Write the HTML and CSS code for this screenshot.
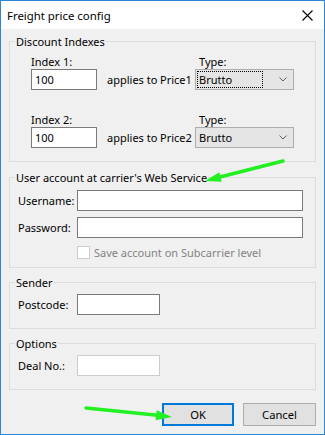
FILE: index.html
```html
<!DOCTYPE html>
<html lang="en">
<head>
  <meta charset="UTF-8" />
  <title>Freight price config</title>
  <link rel="stylesheet" href="styles.css">
</head>
<body>

  <div class="window">

    <!-- Title bar -->
    <div class="titlebar">
      <span class="title">Freight price config</span>
      <svg class="close" width="11" height="11" viewBox="0 0 11 11" aria-label="Close">
        <path d="M0.5 0.5 L10.5 10.5 M10.5 0.5 L0.5 10.5" stroke="#000" stroke-width="1.1" fill="none" />
      </svg>
    </div>

    <div class="content">

      <!-- Discount indexes -->
      <fieldset class="group">
        <legend>Discount Indexes</legend>
        <div class="group-body discount-body">
          <div class="index-row">
            <label class="row-label">Index 1:</label>
            <span></span>
            <span></span>
            <label class="type-label">Type:</label>
            <input class="textbox index-input" type="text" value="100" />
            <span class="applies">applies to</span>
            <span class="price">Price1</span>
            <div class="combo">
              <span class="combo-text focused">Brutto</span>
              <svg class="chevron" width="8" height="5" viewBox="0 0 8 5"><path d="M0.5 0.5 L4 4 L7.5 0.5" stroke="#606060" fill="none" /></svg>
            </div>
          </div>
          <div class="index-row second">
            <label class="row-label">Index 2:</label>
            <span></span>
            <span></span>
            <label class="type-label">Type:</label>
            <input class="textbox index-input" type="text" value="100" />
            <span class="applies">applies to</span>
            <span class="price">Price2</span>
            <div class="combo">
              <span class="combo-text">Brutto</span>
              <svg class="chevron" width="8" height="5" viewBox="0 0 8 5"><path d="M0.5 0.5 L4 4 L7.5 0.5" stroke="#606060" fill="none" /></svg>
            </div>
          </div>
        </div>
      </fieldset>

      <!-- Web service account -->
      <fieldset class="group group-account">
        <legend>User account at carrier's Web Service</legend>
        <div class="group-body account-body">
          <div class="form-grid">
            <label>Username:</label>
            <input class="textbox" type="text" />
            <label>Password:</label>
            <input class="textbox" type="password" />
            <div class="check-row">
              <span class="checkbox"></span>
              <span class="check-text">Save account on Subcarrier level</span>
            </div>
          </div>
        </div>
      </fieldset>

      <!-- Sender -->
      <fieldset class="group group-small">
        <legend>Sender</legend>
        <div class="group-body small-body">
          <div class="form-grid">
            <label>Postcode:</label>
            <input class="textbox short" type="text" />
          </div>
        </div>
      </fieldset>

      <!-- Options -->
      <fieldset class="group group-small">
        <legend>Options</legend>
        <div class="group-body small-body">
          <div class="form-grid">
            <label>Deal No.:</label>
            <input class="textbox short light" type="text" />
          </div>
        </div>
      </fieldset>

      <div class="buttons">
        <button type="button" class="btn btn-default">OK</button>
        <button type="button" class="btn">Cancel</button>
      </div>
    </div>

    <!-- Annotation arrows drawn over the dialog -->
    <svg class="arrows" width="325" height="435" viewBox="0 0 325 435">
      <g stroke="#22f022" stroke-width="3.5" stroke-linecap="round">
        <line x1="283" y1="161" x2="216" y2="178" />
        <line x1="86" y1="408" x2="160" y2="415.5" />
      </g>
      <g fill="#22f022">
        <polygon points="205,181 221.7,181.8 219.3,172.2" />
        <polygon points="172,417 156.6,410.3 155.6,420.3" />
      </g>
    </svg>
  </div>

</body>
</html>
```

FILE: styles.css
```css
/* Base */
body {
  margin: 0;
  font-family: 'Noto Sans', 'Open Sans', sans-serif;
  font-size: 11px;
  line-height: 15px;
  color: #000;
  background: #fff;
}

/* Dialog window */
.window {
  position: relative;
  width: 325px;
  height: 435px;
  box-sizing: border-box;
  border: 1px solid #2a86d8;
  background: #f0f0f0;
}

.titlebar {
  height: 28px;
  background: #fff;
  display: flex;
  align-items: center;
  justify-content: space-between;
  padding: 0 11px 0 6px;
  font-size: 11.4px;
}

.title {
  padding-top: 1px;
}

.close {
  display: block;
  margin-top: 1px;
}

.content {
  padding: 5px 8px 0 8px;
}

/* Group boxes */
.group {
  margin: 0 0 8px 0;
  padding: 0;
  border: 1px solid #dcdcdc;
  min-width: 0;
}

.group legend {
  margin-left: 5px;
  padding: 0 1px;
  line-height: 15px;
}

.group-body {
  padding: 5px 12px 13px 8px;
}

.discount-body {
  padding-left: 21px;
}

.group-account {
  margin-bottom: 7px;
}

.account-body {
  padding-bottom: 6px;
}

.group-small {
  margin-bottom: 7px;
}

.small-body {
  padding-top: 4px;
}

/* Discount rows */
.index-row {
  display: grid;
  grid-template-columns: 76px 53px 35px 99px;
  grid-template-rows: 15px 21px;
  align-items: center;
}

.index-row.second {
  margin-top: 22px;
}

.type-label {
  padding-left: 4px;
}

.index-input {
  width: 66px;
}

.applies,
.price {
  white-space: nowrap;
}

/* Text boxes */
.textbox {
  box-sizing: border-box;
  height: 21px;
  margin: 0;
  padding: 0 3px;
  border: 1px solid #7a7a7a;
  background: #fff;
  font-family: inherit;
  font-size: 11px;
  color: #000;
  outline: none;
}

.textbox.short {
  width: 83px;
}

.textbox.light {
  border-color: #cccccc;
}

/* Combo box */
.combo {
  box-sizing: border-box;
  height: 21px;
  border: 1px solid #adadad;
  background: #e5e5e5;
  display: flex;
  align-items: center;
  padding: 1px;
}

.combo-text {
  flex: 1;
  height: 15px;
  padding: 0 2px 0 1px;
  margin-right: 16px;
  border: 1px dotted transparent;
}

.combo-text.focused {
  border-color: #000;
}

.chevron {
  margin-right: 5px;
}

/* Form grids */
.form-grid {
  display: grid;
  grid-template-columns: 59px 226px;
  row-gap: 6px;
  align-items: center;
}

.check-row {
  grid-column: 2;
  display: flex;
  align-items: center;
  gap: 4px;
  height: 17px;
}

.checkbox {
  width: 11px;
  height: 11px;
  border: 1px solid #cccccc;
  background: #fff;
}

.check-text {
  color: #838383;
}

/* Buttons */
.buttons {
  display: flex;
  justify-content: flex-end;
  gap: 9px;
  margin-top: 13px;
}

.btn {
  box-sizing: border-box;
  width: 73px;
  height: 23px;
  margin: 0;
  border: 1px solid #adadad;
  background: #e1e1e1;
  font-family: inherit;
  font-size: 11.2px;
  color: #000;
  padding: 0;
}

.btn-default {
  border: 2px solid #0078d7;
  width: 72px;
}

/* Overlay annotations */
.arrows {
  position: absolute;
  top: -1px;
  left: -1px;
  pointer-events: none;
}
```
